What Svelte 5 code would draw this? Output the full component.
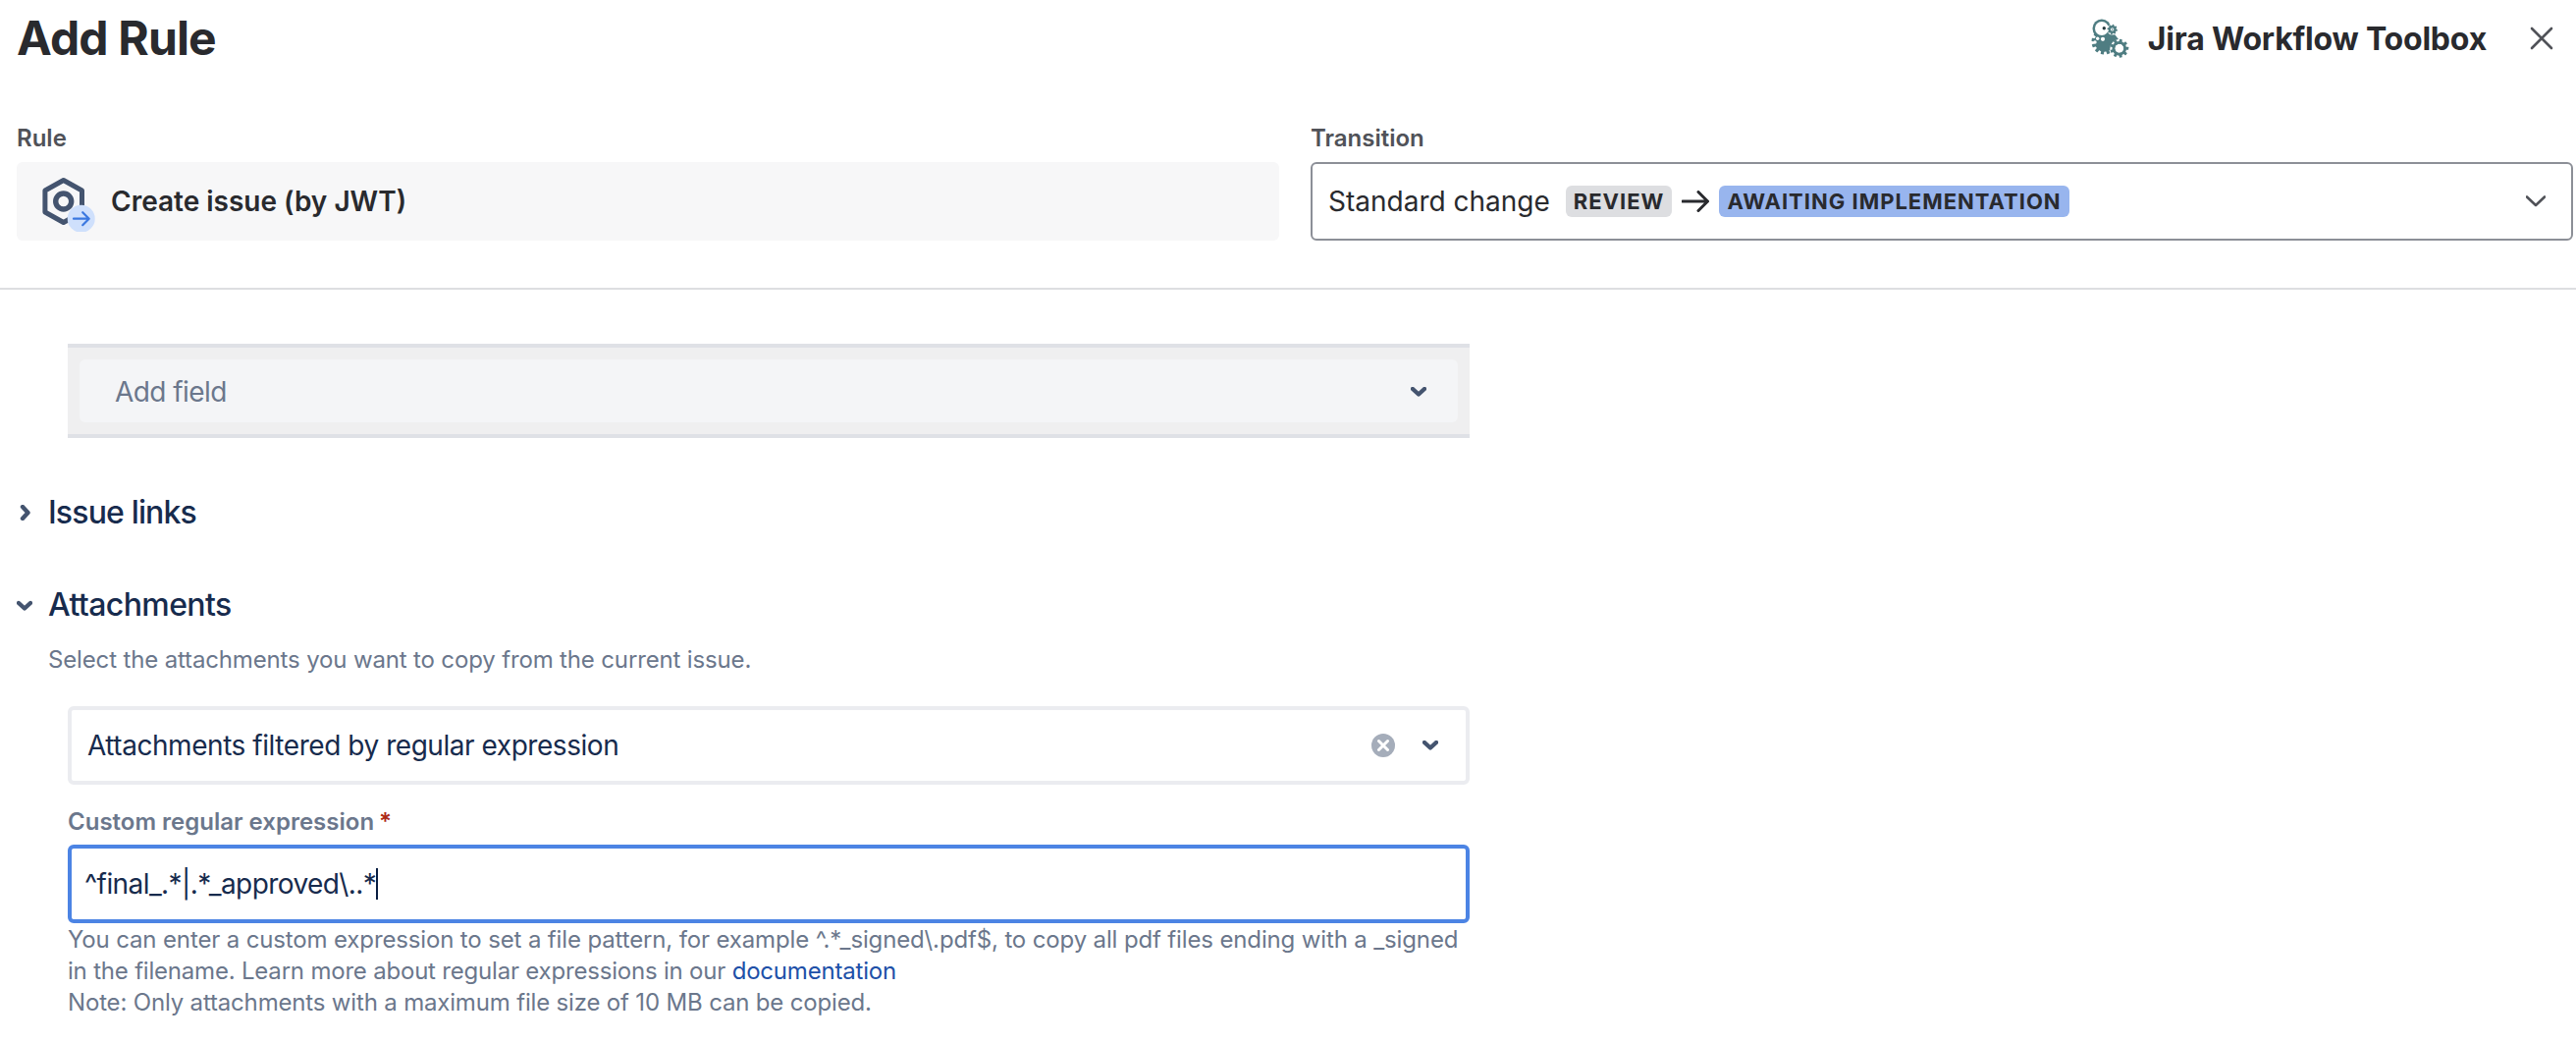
<script>
  const teal = '#4f7d82';
  const pattern = '^final_.*|.*_approved\\..*';
  const help = [
    'You can enter a custom expression to set a file pattern, for example ^.*_signed\\.pdf$, to copy all pdf files ending with a _signed',
    'in the filename. Learn more about regular expressions in our ',
    'Note: Only attachments with a maximum file size of 10 MB can be copied.'
  ];
</script>

{#snippet gear(cx, cy, r, hole, teeth, tw)}
  <g transform="translate({cx} {cy})">
    {#each Array(teeth) as _, i}
      <rect x={-tw / 2} y={-r} width={tw} height={r - hole} rx="0.4" transform="rotate({(360 / teeth) * i + 10})" fill={teal} />
    {/each}
    <circle r={(r * 0.78 + hole) / 2} fill="none" stroke={teal} stroke-width={r * 0.78 - hole} />
  </g>
{/snippet}

{#snippet chevronDown()}
  <svg class="chev" viewBox="0 0 16 10" width="16" height="10"><path d="M2 2L8 7.5L14 2" /></svg>
{/snippet}

<div class="dialog">
  <header>
    <h1>Add Rule</h1>
    <div class="app">
      <svg viewBox="0 0 44 40" width="44" height="40">
        {@render gear(17.5, 23.5, 13, 0, 12, 3.2)}
        <circle cx="14.9" cy="10" r="9.4" fill={teal} />
        <path d="M20 14L28 16L32 21L27 24L20 24z" fill={teal} />
        <circle cx="14.9" cy="10" r="6.9" fill="#fff" />
        <circle cx="17.3" cy="9.7" r="1.7" fill="#263b40" />
        <circle cx="25.7" cy="11" r="5.6" fill="#fff" />
        {@render gear(25.7, 11, 5.2, 1.8, 8, 1.7)}
        <circle cx="25.7" cy="11" r="0.8" fill={teal} />
        <circle cx="10.7" cy="20.3" r="1.7" fill="#fff" />
        <circle cx="16" cy="20.8" r="2.1" fill="#fff" />
        <circle cx="8" cy="24" r="1.7" fill="#fff" />
        <circle cx="32.8" cy="30.3" r="9.4" fill="#fff" />
        {@render gear(32.8, 30.3, 9.4, 4.5, 9, 2.9)}
      </svg>
      <span class="appname">Jira Workflow Toolbox</span>
      <svg class="close" viewBox="0 0 24 24" width="24" height="24"><path d="M2 2L22 22M22 2L2 22" /></svg>
    </div>
  </header>

  <section class="summary">
    <div class="col">
      <div class="label">Rule</div>
      <div class="rulebox">
        <svg viewBox="0 0 54 62" width="54" height="62">
          <path d="M21.7 9.5L40.5 20V42L21.7 52.5L2.9 42V20Z" fill="none" stroke="#44546f" stroke-width="5" stroke-linejoin="round" />
          <circle cx="21.7" cy="31" r="8" fill="none" stroke="#44546f" stroke-width="5.4" />
          <circle cx="39.7" cy="48.7" r="14" fill="#cfe0fc" />
          <path d="M32 48.7H47M41.2 42.2L47.7 48.7L41.2 55.2" fill="none" stroke="#3b78e0" stroke-width="2.2" stroke-linecap="round" stroke-linejoin="round" />
        </svg>
        <span class="rulename">Create issue (by JWT)</span>
      </div>
    </div>
    <div class="col">
      <div class="label">Transition</div>
      <div class="transition">
        <span class="tname">Standard change</span>
        <span class="badge grey">REVIEW</span>
        <svg class="arrow" viewBox="0 0 28 22" width="28" height="22"><path d="M1 11H26M17 1.5L26.5 11L17 20.5" /></svg>
        <span class="badge blue">AWAITING IMPLEMENTATION</span>
        <svg class="down" viewBox="0 0 20 12" width="20" height="12"><path d="M1 1.5L10 10L19 1.5" /></svg>
      </div>
    </div>
  </section>

  <main>
    <div class="addwrap">
      <div class="addfield">
        <span class="add">Add field</span>
        {@render chevronDown()}
      </div>
    </div>

    <div class="head links">
      <svg class="chev" viewBox="0 0 16 16" width="16" height="16"><path d="M6 2L11.5 8L6 14" /></svg>
      <h2>Issue links</h2>
    </div>
    <div class="head att">
      <svg class="chev" viewBox="0 0 16 16" width="16" height="16"><path d="M2 6L8 11.5L14 6" /></svg>
      <h2>Attachments</h2>
    </div>
    <p class="desc">Select the attachments you want to copy from the current issue.</p>

    <div class="select">
      <span>Attachments filtered by regular expression</span>
      <svg class="clear" viewBox="0 0 24 24" width="24" height="24">
        <circle cx="12" cy="12" r="12" fill="#a5adba" />
        <path d="M7.5 7.5L16.5 16.5M16.5 7.5L7.5 16.5" stroke="#fff" stroke-width="3" stroke-linecap="round" />
      </svg>
      {@render chevronDown()}
    </div>

    <div class="flabel">Custom regular expression<span class="req">*</span></div>
    <div class="input"><span>{pattern}</span><i class="caret"></i></div>
    <div class="help">
      <div>{help[0]}</div>
      <div class="l2">{help[1]}<a href="#doc">documentation</a></div>
      <div class="l3">{help[2]}</div>
    </div>
  </main>
</div>

<style>
  :global(body) { margin: 0; background: #fff; }
  .dialog { width: 2624px; height: 1062px; overflow: hidden; font-family: Inter, "Liberation Sans", sans-serif; color: #292a2e; white-space: nowrap; }
  h1, h2, p { margin: 0; }
  svg { display: block; flex: none; }
  header { display: flex; justify-content: space-between; height: 120px; padding: 0 23px 0 17px; box-sizing: border-box; }
  h1 { font-size: 48px; line-height: 77px; font-weight: 700; letter-spacing: -0.85px; }
  .app { display: flex; align-items: center; height: 78px; }
  .appname { font-size: 32px; font-weight: 700; letter-spacing: -0.2px; margin-left: 18px; }
  .close { margin-left: 44px; }
  .close path { fill: none; stroke: #505258; stroke-width: 2.6; stroke-linecap: round; }
  .summary { display: flex; gap: 32px; padding: 0 3px 48px 17px; border-bottom: 2px solid #dddee1; }
  .col { width: 1286px; }
  .label { font-size: 24px; line-height: 41px; height: 45px; font-weight: 600; color: #505258; }
  .rulebox { height: 80px; background: #f7f7f8; border-radius: 6px; display: flex; align-items: center; box-sizing: border-box; padding-left: 26px; }
  .rulename { font-size: 28px; font-weight: 600; margin-left: 16px; }
  .transition { height: 80px; box-sizing: border-box; border: 2px solid #8c8f97; border-radius: 6px; display: flex; align-items: center; padding: 0 26px 0 16px; }
  .tname { font-size: 28px; }
  .badge { height: 32px; line-height: 33px; font-size: 22px; font-weight: 700; padding: 0 8px; border-radius: 6px; letter-spacing: 1px; }
  .grey { background: #dddee1; margin-left: 16px; }
  .blue { background: #98b5ee; }
  .arrow { margin: 0 10px; }
  .arrow path, .down path { fill: none; stroke: #292a2e; stroke-width: 3; stroke-linecap: round; stroke-linejoin: round; }
  .down { margin-left: auto; }
  .down path { stroke: #505258; stroke-width: 2.6; }
  main { width: 1497px; padding-top: 55px; }
  .addwrap { margin-left: 69px; height: 96px; box-sizing: border-box; border: solid #dfe1e6; border-width: 4px 0; padding: 12px; background: #efeff0; }
  .addfield { height: 64px; box-sizing: border-box; background: #f4f5f7; border-radius: 6px; display: flex; align-items: center; justify-content: space-between; padding: 2px 32px 0 36px; font-size: 28px; color: #6b778c; }
  .add { letter-spacing: -0.55px; }
  .chev path { fill: none; stroke: #44546f; stroke-width: 4.4; stroke-linecap: round; stroke-linejoin: round; }
  .head { display: flex; align-items: center; height: 40px; padding-left: 17px; gap: 16px; }
  .links { margin-top: 56px; letter-spacing: -0.85px; }
  .att { margin-top: 54px; letter-spacing: -0.6px; }
  h2 { font-size: 32px; line-height: 40px; font-weight: 500; color: #172b4d; }
  .desc { margin-left: 49px; margin-top: 20px; font-size: 24px; line-height: 32px; height: 63px; color: #6b778c; letter-spacing: -0.15px; }
  .select, .input { margin-left: 69px; height: 80px; box-sizing: border-box; border: 4px solid #ebecf0; border-radius: 6px; display: flex; align-items: center; font-size: 28px; color: #172b4d; letter-spacing: -0.45px; }
  .select { padding: 0 28px 0 16px; }
  .clear { margin-left: auto; margin-right: 28px; }
  .flabel { margin-left: 69px; height: 61px; line-height: 76px; font-size: 24px; font-weight: 600; color: #6b778c; display: flex; }
  .req { color: #ae2a19; margin-left: 5px; }
  .input { border-color: #4c84e4; padding-left: 13px; letter-spacing: -0.58px; }
  .caret { width: 2px; height: 32px; background: #091e42; }
  .help { margin-left: 69px; padding-top: 1px; font-size: 24px; line-height: 32px; color: #6b778c; letter-spacing: -0.14px; }
  .l2 { letter-spacing: -0.2px; }
  .l3 { letter-spacing: -0.17px; }
  a { color: #2050a8; text-decoration: none; }
</style>
